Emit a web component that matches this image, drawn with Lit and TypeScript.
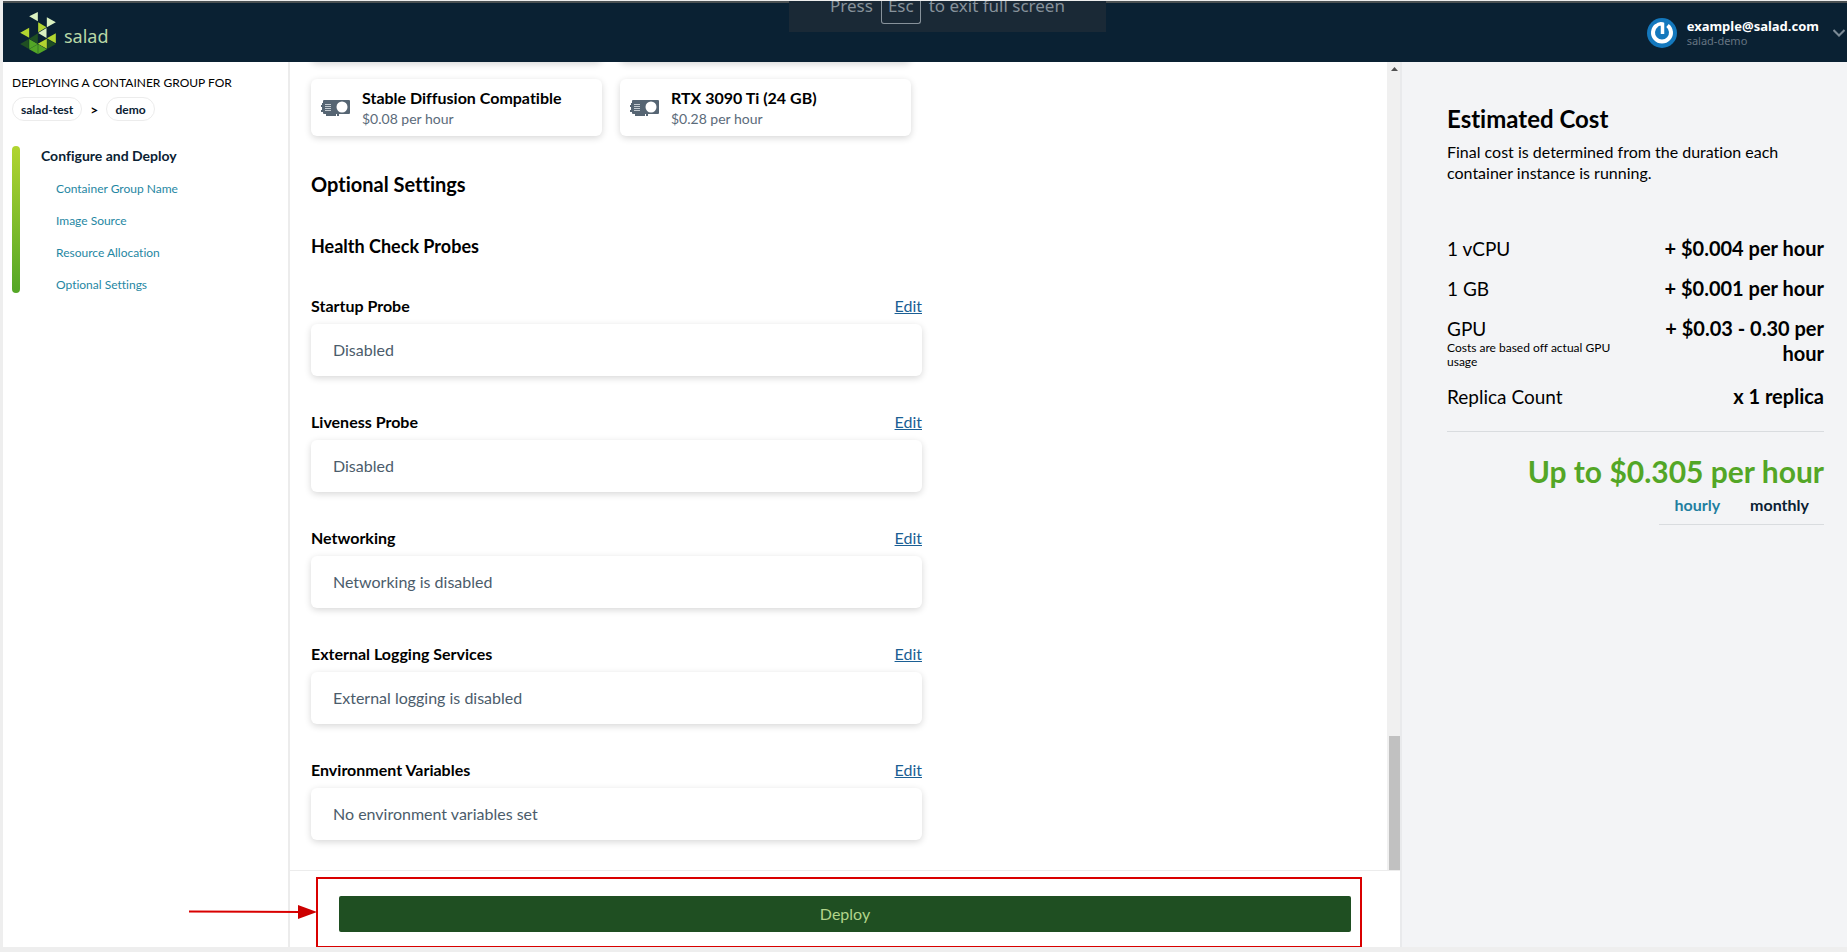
import { LitElement, html, css, svg, nothing } from "lit";
import { customElement } from "lit/decorators.js";

const PROBES = [
  ["Startup Probe", "Disabled"],
  ["Liveness Probe", "Disabled"],
  ["Networking", "Networking is disabled"],
  ["External Logging Services", "External logging is disabled"],
  ["Environment Variables", "No environment variables set"],
];

const GPUS = [
  ["Stable Diffusion Compatible", "$0.08 per hour"],
  ["RTX 3090 Ti (24 GB)", "$0.28 per hour"],
];

const COSTS = [
  ["1 vCPU", "", "+ $0.004 per hour"],
  ["1 GB", "", "+ $0.001 per hour"],
  ["GPU", "Costs are based off actual GPU usage", "+ $0.03 - 0.30 per hour"],
  ["Replica Count", "", "x 1 replica"],
];

const LINKS = ["Container Group Name", "Image Source", "Resource Allocation", "Optional Settings"];

const logoMark = svg`
  <path fill="#dbf1c1" d="M88 48L114 35V63ZM141 51L168 66L141 81ZM115 98L140 83V113Z"/>
  <path fill="#b2d530" d="M61 97L88 82V112ZM115 66L140 81L115 96ZM141 114L168 99V129ZM114 130L141 115V145Z"/>
  <path fill="#53a626" d="M88 116L114 131L88 146ZM88 147L114 132V161ZM115 132L141 147L115 161Z"/>
  <path fill="#1f4f22" d="M61 131L87 116V146ZM88 115L114 99V130ZM142 116L168 131L142 146Z"/>`;

const gpuIcon = html`<svg class="gpu-icon" viewBox="0 0 29 16" aria-hidden="true">
  <path fill="#566573" d="M3 0H28Q29 0 29 1V13Q29 14 28 14H18V16H16V14H15V16H5V14H3Q2 14 2 13V12H0V10H1V7H0V5H1V3H2V1Q2 0 3 0Z"/>
  <path stroke="#c3cad0" stroke-width="1" d="M4 4.500h6M4 6.500h6M4 8.500h6M4 10.500h6"/>
  <circle cx="21" cy="7" r="5.500" fill="#fff"/>
</svg>`;

@customElement("app-root")
export class AppRoot extends LitElement {
  static styles = css`
    :host {
      display: block;
      font-family: Lato, "Open Sans", sans-serif;
      font-variant-ligatures: none;
      color: #000;
    }
    * { box-sizing: border-box; }
    h1, h2, h3, h4, p, ul, dl, dd, dt { margin: 0; padding: 0; }
    ul { list-style: none; }
    button { font-family: inherit; cursor: pointer; }
    .page {
      position: relative;
      height: 100vh;
      display: flex;
      flex-direction: column;
      overflow: hidden;
      background: #fff;
      border: solid #eeeeee;
      border-width: 1px 0 5px 3px;
    }
    .header {
      flex: none;
      height: 61px;
      padding: 0 2px 0 17px;
      display: flex;
      align-items: center;
      justify-content: space-between;
      background: #0a2133;
      border-top: 2px solid #4b5153;
    }
    .brand {
      display: flex; align-items: center; gap: 8px;
      color: #b8d7a6; font: 18px/24px "Noto Sans", sans-serif; text-decoration: none;
    }
    .brand svg { width: 36px; height: 42px; }
    .brand span { padding-top: 6px; }
    .account {
      display: flex; align-items: center;
      border: 0; background: none; padding: 0; color: #fff; text-align: left;
      font: 700 13px/16px "Noto Sans", sans-serif;
    }
    .account small { display: block; font-size: 11px; line-height: 14px; font-weight: 400; color: #667582; }
    .avatar { width: 30px; height: 30px; margin-right: 10px; }
    .chevron { width: 12px; height: 8px; margin-left: 14px; }
    .hint {
      position: absolute; top: -1px; left: 786px;
      height: 32px; width: 317px;
      display: flex; justify-content: center; gap: 8px;
      background: #1a2936; color: #87929b;
      font: 17px/12px "Noto Sans", sans-serif; white-space: nowrap;
    }
    .hint kbd {
      height: 24px; padding: 0 6px; font: inherit;
      border: 1px solid #87929b; border-top: 0; border-radius: 0 0 3px 3px;
    }
    .body { flex: 1; min-height: 0; display: flex; }
    .sidebar { flex: none; width: 287px; border-right: 2px solid #ececec; padding: 13px 9px; }
    .kicker { font-size: 12px; line-height: 16px; }
    .crumbs { display: flex; align-items: center; gap: 8px; margin-top: 6px; font-size: 12px; font-weight: 700; }
    .crumbs span { font-size: 14px; }
    .crumb {
      height: 24px; padding: 0 8px; display: flex; align-items: center;
      border: 1px solid #ececec; border-radius: 12px; color: #0a2133; text-decoration: none;
    }
    .steps { display: flex; gap: 21px; margin-top: 25px; }
    .progress { width: 8px; border-radius: 4px; background: linear-gradient(200deg, #b2d530, #53a626); }
    .step-title { font-size: 14px; line-height: 20px; color: #0a2133; }
    .step-links { display: grid; gap: 16px; padding: 15px 0 0 15px; font-size: 12px; line-height: 16px; }
    .step-links a { color: #1f87a3; text-decoration: none; }
    .main { flex: 1; min-width: 0; display: flex; flex-direction: column; }
    .scroll { flex: 1; min-height: 0; display: flex; overflow: hidden; }
    .content { flex: 1; padding: 0 21px; }
    .form { max-width: 611px; }
    .gpus { display: grid; grid-template-columns: repeat(2, 291px); gap: 17px 18px; }
    .gpu {
      height: 57px; padding: 0 10px; display: flex; align-items: center; gap: 12px;
      border-radius: 6px; box-shadow: 0 2px 7px rgba(0, 0, 0, 0.16);
    }
    .gpu.above { margin-top: -57px; }
    .gpu-icon { width: 29px; height: 16px; }
    .gpu-name { font-size: 16px; line-height: 22px; font-weight: 700; }
    .gpu-price { font-size: 14px; line-height: 20px; color: #5b6b7a; }
    h2 { font-size: 20px; line-height: 24px; margin-top: 36px; }
    h3 { font-size: 18px; line-height: 20px; margin: 40px 0; }
    .probes { display: grid; gap: 36px; }
    .probe-head { display: flex; justify-content: space-between; font-size: 16px; line-height: 20px; margin-bottom: 8px; }
    .probe-head h4 { font-size: 16px; }
    .probe-head a { color: #1b5f94; }
    .probe-box {
      height: 52px; padding: 0 22px 2px; display: flex; align-items: center;
      border-radius: 6px; box-shadow: 0 2px 7px rgba(0, 0, 0, 0.16);
      font-size: 16px; color: #4b5c6b;
    }
    .bar {
      flex: none; width: 13px; background: #f0f0f0;
      display: flex; flex-direction: column; justify-content: space-between; align-items: flex-end;
    }
    .bar svg { width: 11px; height: 14px; }
    .thumb { width: 11px; height: 134px; background: #c1c1c1; }
    .footer { position: relative; flex: none; height: 77px; padding: 25px 49px 0; border-top: 1px solid #ececec; background: #fff; }
    .deploy {
      display: block; width: 100%; height: 36px; padding: 0 0 2px; border: 0; border-radius: 2px;
      background: #1f4f22; color: #b2d58a; font-size: 16px;
    }
    .marker { position: absolute; inset: 6px 38px -1px 26px; border: 2px solid #d90000; pointer-events: none; }
    .arrow { position: absolute; right: calc(100% + 1px); top: 26px; width: 128px; height: 14px; }
    .cost { flex: none; width: 447px; padding: 43px 23px 0 45px; background: #f3f4f6; border-left: 2px solid #e9eaec; }
    .cost h2 { font-size: 24px; line-height: 28px; margin: 0 0 8px; }
    .lead { font-size: 16px; line-height: 21px; }
    .rows { margin-top: 53px; padding-bottom: 22px; border-bottom: 1px solid #d9dcdf; display: grid; gap: 15px; }
    .row { display: grid; grid-template-columns: 1fr 1fr; gap: 16px; font-size: 19px; line-height: 25px; }
    .row small { display: block; font-size: 12px; line-height: 14px; }
    .row dd { text-align: right; font-size: 20px; font-weight: 700; }
    .total { margin-top: 21px; font-size: 30px; line-height: 36px; font-weight: 700; text-align: right; color: #53a626; }
    .tabs { display: flex; justify-content: flex-end; }
    .tab {
      height: 36px; padding: 0 15px 4px; border: 0; border-bottom: 1px solid #d9dcdf; background: none;
      font-size: 16px; font-weight: 700; color: #0a2133;
    }
    .tab.on { color: #1f7fa0; }
  `;

  private header() {
    return html`<header class="header">
      <a class="brand" href="#"><svg viewBox="61 35 107 126" aria-hidden="true">${logoMark}</svg><span>salad</span></a>
      <button class="account">
        <svg class="avatar" viewBox="0 0 30 30" aria-hidden="true">
          <circle cx="15" cy="15" r="15" fill="#1478bd"/>
          <path fill="none" stroke="#fff" stroke-width="4" d="M9.500 7.500a9 9 0 1 0 11 0"/>
          <path fill="none" stroke="#fff" stroke-width="3.500" d="M9 8Q12 5 15.500 6V16"/>
        </svg>
        <span>example@salad.com<small>salad-demo</small></span>
        <svg class="chevron" viewBox="0 0 12 8" aria-hidden="true">
          <path fill="none" stroke="#7c8a96" stroke-width="2" d="M0.500 1l5.500 5.500L11.500 1"/>
        </svg>
      </button>
    </header>`;
  }

  private sidebar() {
    return html`<aside class="sidebar">
      <p class="kicker">DEPLOYING A CONTAINER GROUP FOR</p>
      <nav class="crumbs"><a class="crumb" href="#">salad-test</a><span>&gt;</span><a class="crumb" href="#">demo</a></nav>
      <div class="steps">
        <div class="progress"></div>
        <nav>
          <h4 class="step-title">Configure and Deploy</h4>
          <ul class="step-links">${LINKS.map((l) => html`<li><a href="#">${l}</a></li>`)}</ul>
        </nav>
      </div>
    </aside>`;
  }

  private main() {
    return html`<main class="main">
      <div class="scroll">
        <div class="content"><div class="form">
          <div class="gpus">
            <div class="gpu above"></div><div class="gpu above"></div>
            ${GPUS.map(([name, price]) => html`<div class="gpu">${gpuIcon}
              <div><p class="gpu-name">${name}</p><p class="gpu-price">${price}</p></div></div>`)}
          </div>
          <h2>Optional Settings</h2>
          <h3>Health Check Probes</h3>
          <div class="probes">${PROBES.map(([name, value]) => html`<section>
            <div class="probe-head"><h4>${name}</h4><a href="#">Edit</a></div>
            <div class="probe-box">${value}</div></section>`)}</div>
        </div></div>
        <div class="bar">
          <svg viewBox="0 0 11 14" aria-hidden="true"><path fill="#505050" d="M2 9l3.500-4L9 9z"/></svg>
          <div class="thumb"></div>
        </div>
      </div>
      <footer class="footer">
        <button class="deploy">Deploy</button>
        <div class="marker">
          <svg class="arrow" viewBox="0 0 128 14" aria-hidden="true">
            <path stroke="#d90000" stroke-width="2" d="M0 6.500L112 7"/><path fill="#c00" d="M109 0l19 7-19 7z"/>
          </svg>
        </div>
      </footer>
    </main>`;
  }

  private cost() {
    return html`<aside class="cost">
      <h2>Estimated Cost</h2>
      <p class="lead">Final cost is determined from the duration each container instance is running.</p>
      <dl class="rows">${COSTS.map(([name, note, price]) => html`<div class="row">
        <dt>${name}${note ? html`<small>${note}</small>` : nothing}</dt><dd>${price}</dd></div>`)}</dl>
      <p class="total">Up to $0.305 per hour</p>
      <div class="tabs"><button class="tab on">hourly</button><button class="tab">monthly</button></div>
    </aside>`;
  }

  render() {
    return html`<div class="page">
      ${this.header()}
      <div class="body">${this.sidebar()}${this.main()}${this.cost()}</div>
      <div class="hint"><span>Press</span><kbd>Esc</kbd><span>to exit full screen</span></div>
    </div>`;
  }
}
